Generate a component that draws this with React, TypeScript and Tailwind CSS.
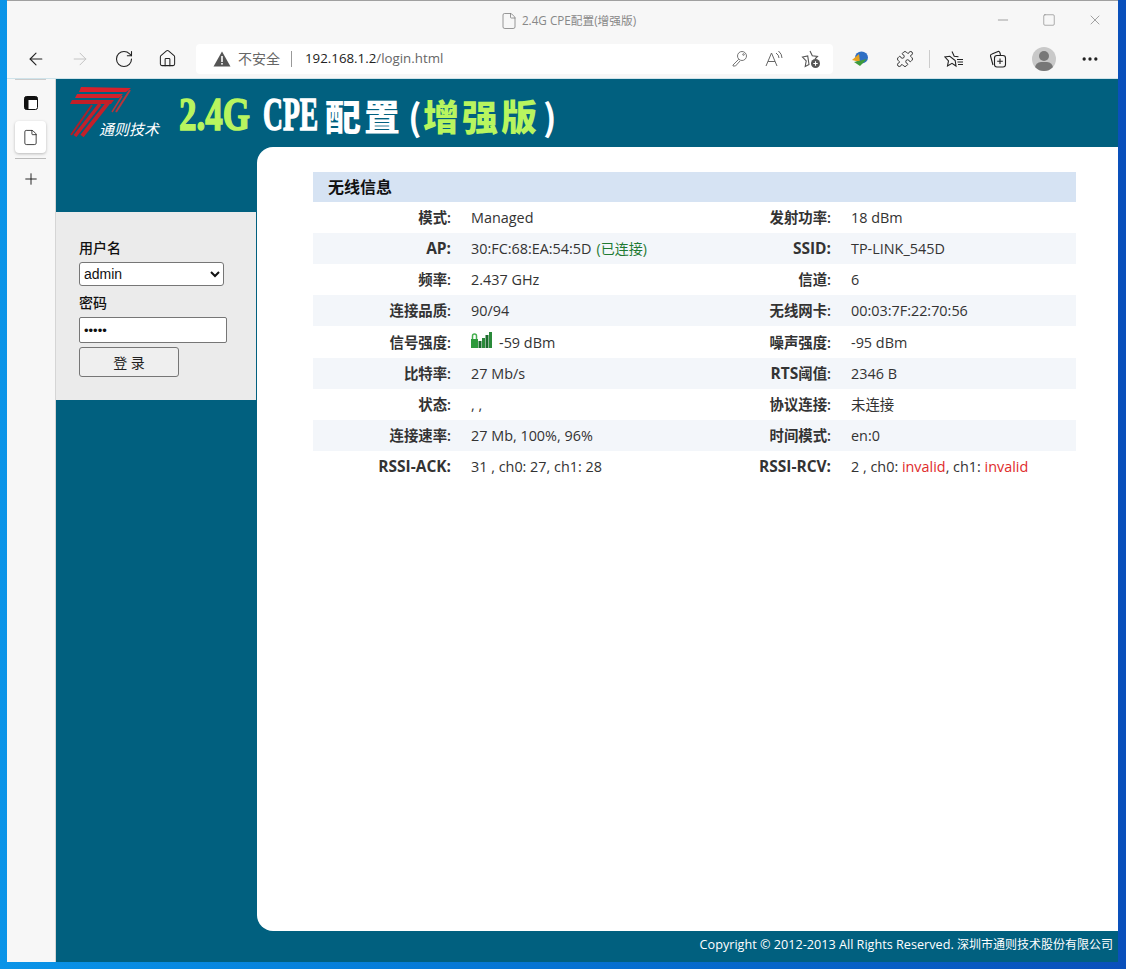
import { ArrowLeft, ArrowRight, RotateCw, Home, Puzzle, Plus, Minus, Square, X, Ellipsis, File } from "lucide-react";

const uiFont = "font-['Open_Sans','Noto_Sans_CJK_SC',sans-serif]";

const rows = [
  { a: "模式:", b: "Managed", c: "发射功率:", d: "18 dBm" },
  { a: "AP:", latinA: true, b: "30:FC:68:EA:54:5D", tag: "(已连接)", c: "SSID:", latinC: true, d: "TP-LINK_545D", alt: true },
  { a: "频率:", b: "2.437 GHz", c: "信道:", d: "6" },
  { a: "连接品质:", b: "90/94", c: "无线网卡:", d: "00:03:7F:22:70:56", alt: true },
  { a: "信号强度:", b: "-59 dBm", signal: true, c: "噪声强度:", d: "-95 dBm" },
  { a: "比特率:", b: "27 Mb/s", c: "阈值:", prefixC: "RTS", d: "2346 B", alt: true },
  { a: "状态:", b: ", ,", c: "协议连接:", d: "未连接" },
  { a: "连接速率:", b: "27 Mb, 100%, 96%", c: "时间模式:", d: "en:0", alt: true },
];

const SignalIcon = () => (
  <svg width="21" height="17" viewBox="0 0 21 17" className="mr-[7px] -mt-[3px]">
    <path d="M1.5 8V4a2 2 0 0 1 4 0v4" fill="none" stroke="#46b04f" strokeWidth="1.5" />
    <rect x="0" y="7" width="7" height="9" fill="#2e9a3c" />
    <rect x="7.5" y="9" width="3" height="7" fill="#1c6b2e" />
    <rect x="11" y="6" width="3" height="10" fill="#2a8a3a" />
    <rect x="14.5" y="3" width="3" height="13" fill="#1c6b2e" />
    <rect x="18" y="0" width="3" height="16" fill="#2a8a3a" />
  </svg>
);

const Logo = () => (
  <div className="relative w-[97px] h-[52px]">
    <svg width="66" height="50" viewBox="0 0 66 50" fill="none" className="block">
      <path d="M12 0 L62 1 L57 5 L10 5Z" fill="#d8202b" />
      <path d="M8 7 L54 7 L50 11 L6 11Z" fill="#d3212a" />
      <path d="M3 13 L45 13 L42 17 L1 17Z" fill="#c21f28" />
      <path d="M39 16 L13 49" stroke="#c4202a" strokeWidth="4" />
      <path d="M31 17 L6 49" stroke="#c4202a" strokeWidth="3.5" />
      <path d="M23 18 L2 48" stroke="#b01e27" strokeWidth="2" />
      <path d="M61 3 L47 25" stroke="#b8343a" strokeWidth="2" />
      <path d="M53 9 L43 25" stroke="#b8343a" strokeWidth="1.5" />
    </svg>
    <span className="absolute left-[30px] top-[33px] text-[15px] leading-[18px] italic whitespace-nowrap text-white font-['Noto_Sans_CJK_SC',sans-serif]">
      通则技术
    </span>
  </div>
);

const Title = () => (
  <div className="flex items-center h-[60px] -mt-[2px] text-[36px] font-black leading-none text-white font-['Noto_Sans_CJK_SC',sans-serif]">
    <span className="w-[84px] text-[#b8f55f] text-[46px] origin-left scale-x-[0.76] whitespace-nowrap font-bold font-['Liberation_Serif',serif] [-webkit-text-stroke:1.5px_#b8f55f]">
      2.4G
    </span>
    <span className="w-[62px] text-[46px] origin-left scale-x-[0.6] whitespace-nowrap font-bold font-['Liberation_Serif',serif] [-webkit-text-stroke:1.5px_#ffffff]">
      CPE
    </span>
    <span className="w-[83px] whitespace-nowrap tracking-[3px]">配置</span>
    <span className="w-[15px] font-bold">(</span>
    <span className="w-[120px] whitespace-nowrap tracking-[3px] text-[#b8f55f]">增强版</span>
    <span className="font-bold">)</span>
  </div>
);

const Toolbar = () => (
  <div className="flex items-center h-[36px] pb-[4px] bg-[#f7f7f7] border-b border-[#cfe3ea] shrink-0">
    <div className="flex items-center w-[189px] pl-[19px] gap-[24px] text-[#222]">
      <ArrowLeft size={20} strokeWidth={1.3} />
      <ArrowRight size={20} strokeWidth={1.2} className="text-[#c4c4c4]" />
      <RotateCw size={20} strokeWidth={1.3} />
      <Home size={19} strokeWidth={1.3} />
    </div>
    <div className="flex items-center w-[637px] h-[30px] bg-white rounded-[4px] text-[13.3px]">
      <svg width="18" height="16" viewBox="0 0 18 16" className="ml-[17px]">
        <path d="M9 0.5 L17.5 15.5 H0.5Z" fill="#555" />
        <rect x="8.2" y="5" width="1.6" height="6" fill="#fff" />
        <rect x="8.2" y="12" width="1.6" height="1.6" fill="#fff" />
      </svg>
      <span className="ml-[7px] text-[#666] text-[14px]">不安全</span>
      <span className="ml-[11px] w-px h-[16px] bg-[#999]" />
      <span className="ml-[13px] text-[#222]">
        192.168.1.2<span className="text-[#666]">/login.html</span>
      </span>
      <div className="ml-auto flex items-center text-[#777] gap-[17px] pr-[12px]">
        <svg width="17" height="17" viewBox="0 0 17 17" fill="none" stroke="#777" strokeWidth="1">
          <circle cx="11" cy="6" r="4.5" />
          <path d="M7.8 9.2 L2 15 V16 H4.5 L9 11" />
          <circle cx="12.5" cy="4.5" r="0.8" />
        </svg>
        <svg width="19" height="18" viewBox="0 0 19 18" fill="none" stroke="#666" strokeWidth="1">
          <path d="M1 16 L6.5 3 L12 16 M3 11.5 H10" />
          <path d="M11 3 Q14 5 14 8 M13.5 1 Q17 4 17 8" />
        </svg>
        <svg width="20" height="20" viewBox="0 0 20 20" fill="none" stroke="#555" strokeWidth="1.1">
          <path d="M9 2 L11.3 6.8 L16.5 7.5 L14 10 M8 15.5 L4.2 17.5 L5.2 12 L1.5 8 L6.7 7 Z" />
          <circle cx="14.5" cy="14.5" r="4.5" fill="#555" stroke="none" />
          <path d="M14.5 12.3 V16.7 M12.3 14.5 H16.7" stroke="#fff" />
        </svg>
      </div>
    </div>
    <div className="flex items-center flex-1 text-[#222]">
      <svg width="18" height="16" viewBox="0 0 18 16" className="ml-[18px]">
        <ellipse cx="10.5" cy="6.5" rx="6.5" ry="6" fill="#2f6fc4" />
        <path d="M1 9 L8 3 L9 11Z" fill="#e8a21e" />
        <path d="M3 11 L16 8 L9 15Z" fill="#3f9b3a" />
      </svg>
      <Puzzle size={18} strokeWidth={1.2} className="ml-[27px]" />
      <span className="ml-[15px] w-px h-[18px] bg-[#ccc]" />
      <svg width="20" height="18" viewBox="0 0 20 18" fill="none" stroke="#222" strokeWidth="1.1" className="ml-[14px]">
        <path d="M8 1.5 L10.2 6.3 L14.5 6.8 M11.2 10.5 L12 16 L8 13.3 L3.5 16 L4.5 10.8 L1 7 L5.8 6.3 Z" />
        <path d="M13 9.5 H19 M13.5 12 H19 M14 14.5 H19" />
      </svg>
      <svg width="18" height="18" viewBox="0 0 18 18" fill="none" stroke="#222" strokeWidth="1.1" className="ml-[25px]">
        <path d="M4 15 L1.5 6 Q1.2 4.5 3 4 L9 1.5 Q10.5 1 11 3 L11.5 5" />
        <rect x="5.5" y="5.5" width="11" height="11.5" rx="2.5" />
        <path d="M11 8.5 V14 M8.2 11.2 H13.8" />
      </svg>
      <div className="ml-[25px] relative w-[24px] h-[24px] rounded-full bg-[#c9c9c9] overflow-hidden">
        <div className="absolute left-[7px] top-[4px] w-[10px] h-[10px] rounded-full bg-[#777]" />
        <div className="absolute left-[3px] top-[15px] w-[18px] h-[12px] rounded-full bg-[#777]" />
      </div>
      <Ellipsis size={20} strokeWidth={2} className="ml-[24px]" />
    </div>
  </div>
);

const TitleBar = () => (
  <div className="relative flex items-center justify-center h-[42px] pb-[3px] bg-[#f7f7f7] shrink-0">
    <File size={18} strokeWidth={1} className="text-[#777] mr-[4px] ml-[11px]" />
    <span className="text-[11.7px] text-[#888]">2.4G CPE配置(增强版)</span>
    <div className="absolute right-[15px] top-[11px] flex items-center gap-[31px] text-[#777]">
      <Minus size={16} strokeWidth={1} />
      <Square size={14} strokeWidth={1} />
      <X size={16} strokeWidth={1} />
    </div>
  </div>
);

const Sidebar = () => (
  <div className="flex flex-col items-center w-[49px] shrink-0 bg-[#f7f7f7] border-r border-[#d5d5d5] pr-px">
    <div className="w-[31px] h-px bg-[#ccc] mb-[16px]" />
    <svg width="14" height="14" viewBox="0 0 14 14" className="shrink-0">
      <rect x="0.5" y="0.5" width="13" height="13" rx="2" fill="#fff" stroke="#111" />
      <path d="M0.5 2.5a2 2 0 0 1 2-2h9a2 2 0 0 1 2 2v1.5h-9v9.5h-2a2 2 0 0 1-2-2z" fill="#111" />
    </svg>
    <div className="mt-[11px] flex items-center justify-center w-[31px] h-[32px] rounded-[4px] bg-white shadow-[0_1px_3px_rgba(0,0,0,0.25)]">
      <File size={17} strokeWidth={1.1} className="text-[#111]" />
    </div>
    <div className="mt-[5px] w-[31px] h-px bg-[#bbb]" />
    <Plus size={18} strokeWidth={1.2} className="mt-[11px] text-[#111]" />
  </div>
);

const LoginPanel = () => (
  <div className="w-[200px] h-[188px] bg-[#ebebeb] pl-[23px] pt-[26px] text-[#111]">
    <div className="h-[20px] leading-[20px] text-[14px] font-medium">用户名</div>
    <select defaultValue="admin" aria-label="用户名" className="block mt-[4px] w-[145px] h-[24px] bg-white border border-[#767676] rounded-[3px] text-[14px] appearance-auto font-['Liberation_Sans',sans-serif]">
      <option value="admin">admin</option>
    </select>
    <div className="mt-[7px] h-[20px] leading-[20px] text-[14px] font-medium">密码</div>
    <input type="password" defaultValue="admin" aria-label="密码" className="block mt-[4px] w-[148px] h-[26px] bg-white border border-[#767676] rounded-[2px] px-[4px] text-[13px] font-['Liberation_Sans',sans-serif]" />
    <button className="block mt-[4px] w-[100px] h-[30px] bg-[#efefef] border border-[#767676] rounded-[3px] text-[14px] text-[#222]">
      登 录
    </button>
  </div>
);

const Label = ({ text, latin, prefix }: { text: string; latin?: boolean; prefix?: string }) => (
  <div className={`w-[138px] text-right ${latin ? "text-[15.5px] font-bold" : "font-semibold"}`}>
    {prefix && <span className="text-[15.5px] font-bold">{prefix}</span>}
    {text}
  </div>
);

const InfoTable = () => (
  <div className="text-[14.4px] text-[#333]">
    <div className="h-[30px] leading-[30px] pl-[15px] bg-[#d6e3f3] text-[16px] font-semibold text-[#111]">无线信息</div>
    {rows.map((r) => (
      <div key={r.a} className={`flex items-center ${r.signal ? "h-[32px] pt-px" : "h-[31px]"} ${r.alt ? "bg-[#f3f6fa]" : ""}`}>
        <Label text={r.a} latin={r.latinA} />
        <div className="flex items-center w-[242px] pl-[20px]">
          {r.signal && <SignalIcon />}
          <span>{r.b}</span>
          {r.tag && <span className="ml-[5px] text-[14px] text-[#1f7a33]">{r.tag}</span>}
        </div>
        <Label text={r.c} latin={r.latinC} prefix={r.prefixC} />
        <div className="pl-[20px]">{r.d}</div>
      </div>
    ))}
    <div className="flex items-center h-[31px]">
      <Label text="RSSI-ACK:" latin />
      <div className="w-[242px] pl-[20px]">31 , ch0: 27, ch1: 28</div>
      <Label text="RSSI-RCV:" latin />
      <div className="pl-[20px]">
        2 , ch0: <span className="text-[#e02b2b]">invalid</span>, ch1: <span className="text-[#e02b2b]">invalid</span>
      </div>
    </div>
  </div>
);

export default function App() {
  return (
    <div className={`w-[1126px] h-[969px] overflow-hidden bg-gradient-to-r from-[#0a94e8] to-[#0a50bb] pl-[7px] pr-[8px] pb-[7px] ${uiFont}`}>
      <div className="flex flex-col h-full border-t border-[#a0a0a0]">
        <TitleBar />
        <Toolbar />
        <div className="flex flex-1 min-h-0">
          <Sidebar />
          <div className="flex flex-col flex-1 bg-[#01607f]">
            <div className="flex items-start h-[68px] pl-[13px] pt-[8px] shrink-0 gap-[13px]">
              <Logo />
              <Title />
            </div>
            <div className="flex flex-1 min-h-0">
              <div className="w-[201px] shrink-0 pt-[65px]">
                <LoginPanel />
              </div>
              <div className="flex-1 bg-white rounded-l-[16px] pt-[25px] pl-[56px] pr-[42px]">
                <InfoTable />
              </div>
            </div>
            <div className="flex items-center justify-end h-[31px] pr-[5px] pb-[4px] shrink-0 text-[12.65px] font-medium text-white">
              Copyright © 2012-2013 All Rights Reserved.&nbsp;<span className="text-[12px] font-normal">深圳市通则技术股份有限公司</span>
            </div>
          </div>
        </div>
      </div>
    </div>
  );
}
